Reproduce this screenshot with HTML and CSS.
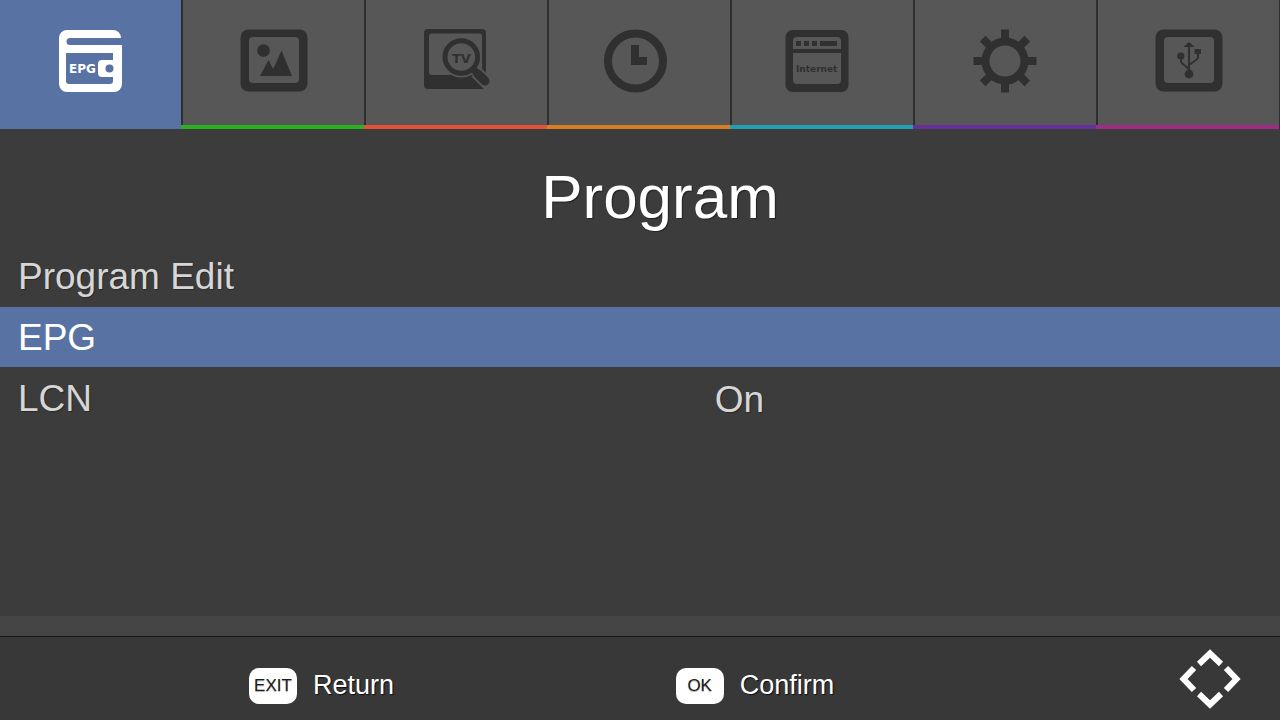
FILE: index.html
```html
<!DOCTYPE html>
<html lang="en">
<head>
    <meta charset="utf-8">
    <title>Program</title>
    <link rel="stylesheet" href="styles.css">
</head>
<body>
    <nav class="tabs">
        <button class="tab tab--active" type="button" aria-label="Program">
            <svg class="tab__icon" viewBox="0 0 81 72">
                <path fill-rule="evenodd" d="M17 6h46a8 8 0 0 1 8 8H20a3.500 3.500 0 0 0 0 7h52v39a8 8 0 0 1-8 8H17a8 8 0 0 1-8-8V14a8 8 0 0 1 8-8zM16 29v28a3 3 0 0 0 3 3h41a3 3 0 0 0 3-3v-4H52a4 4 0 0 1-4-4v-9a4 4 0 0 1 4-4h11v-7z"/>
                <circle class="tab__hole" cx="59.500" cy="44.500" r="4"/>
                <text class="tab__text" x="19" y="49" font-size="12">EPG</text>
            </svg>
        </button>
        <button class="tab tab--green" type="button" aria-label="Picture">
            <svg class="tab__icon" viewBox="0 0 81 72">
                <rect x="7.500" y="5.500" width="67" height="62" rx="8"/>
                <rect class="tab__hole" x="16" y="13" width="50" height="46" rx="4"/>
                <circle cx="30.500" cy="26.500" r="6.300"/>
                <path d="M27 52l8.500-16 4.700 9 8.300-18.500L59 52z"/>
            </svg>
        </button>
        <button class="tab tab--red" type="button" aria-label="Channel Search">
            <svg class="tab__icon" viewBox="0 0 81 72">
                <path fill-rule="evenodd" d="M12 5h54a4 4 0 0 1 4 4v56H12a4 4 0 0 1-4-4V9a4 4 0 0 1 4-4zM16 9.500a3 3 0 0 0-3 3V48a3 3 0 0 0 3 3h50V12.500a3 3 0 0 0-3-3z"/>
                <path class="tab__gap" d="M60 48L75 63"/>
                <circle class="tab__hole" cx="45.300" cy="33" r="20.500"/>
                <path class="tab__handle" d="M57 45l5 5"/>
                <path class="tab__grip" d="M62 50l7 7"/>
                <circle class="tab__lens" cx="45.300" cy="33" r="16.300"/>
                <text class="tab__text" x="36" y="39" font-size="13">TV</text>
            </svg>
        </button>
        <button class="tab tab--orange" type="button" aria-label="Time">
            <svg class="tab__icon" viewBox="0 0 81 72">
                <circle class="tab__line" cx="36.500" cy="37" r="27.500"/>
                <path d="M32 21h8v12h8v8H32z"/>
            </svg>
        </button>
        <button class="tab tab--cyan" type="button" aria-label="Option">
            <svg class="tab__icon" viewBox="0 0 81 72">
                <rect x="3.500" y="6" width="63" height="62" rx="7"/>
                <rect class="tab__hole" x="11" y="13" width="48" height="47" rx="4"/>
                <path d="M11 25h48v4H11zM14 17h5v5h-5zM22 17h5v5h-5zM30 17h5v5h-5zM38 17h17v5H38z"/>
                <text class="tab__text" x="14" y="48" font-size="9">Internet</text>
            </svg>
        </button>
        <button class="tab tab--purple" type="button" aria-label="System">
            <svg class="tab__icon" viewBox="0 0 81 72">
                <circle class="tab__line" cx="40" cy="37" r="19.500"/>
                <path class="tab__line" d="M40 18V5.500M40 56v12.500M21 37H8.500M59 37h12.500M26.500 23.500l-8.800-8.800M53.500 23.500l8.800-8.800M26.500 50.500l-8.800 8.800M53.500 50.500l8.800 8.800"/>
            </svg>
        </button>
        <button class="tab tab--magenta" type="button" aria-label="USB">
            <svg class="tab__icon" viewBox="0 0 81 72">
                <rect x="7.500" y="5.500" width="67" height="62" rx="8"/>
                <rect class="tab__hole" x="16" y="13" width="50" height="46" rx="4"/>
                <path class="tab__wire" d="M41 22v28M33 32v5q0 2 2 3l6 5M50 30v3q0 2-2 3l-7 5"/>
                <path d="M41 18l5.500 5h-11zM46.500 25h6.500v5h-6.500z"/>
                <circle cx="32.800" cy="32" r="3.600"/>
                <circle cx="41" cy="50" r="4.400"/>
            </svg>
        </button>
    </nav>

    <main class="content">
        <h1 class="title">Program</h1>
        <ul class="menu">
            <li><button class="menu__item" type="button">Program Edit</button></li>
            <li><button class="menu__item menu__item--active" type="button">EPG</button></li>
            <li class="menu__item">
                <label for="lcn">LCN</label>
                <select class="menu__value" id="lcn">
                    <option>On</option>
                    <option>Off</option>
                </select>
            </li>
        </ul>
    </main>

    <footer class="footer">
        <button class="hint" type="button"><span class="hint__key">EXIT</span>Return</button>
        <button class="hint" type="button"><span class="hint__key">OK</span>Confirm</button>
        <svg class="arrows" viewBox="0 0 64 64">
            <path d="M21 17L32 6.500 43 17M16 21L5.500 32 16 43M48 21l10.500 11L48 43M21 47l11 10.500L43 47"/>
        </svg>
    </footer>
</body>
</html>
```
FILE: styles.css
```css
* {
    margin: 0;
    padding: 0;
    box-sizing: border-box;
}
body {
    display: flex;
    flex-direction: column;
    min-height: 100vh;
    overflow-x: hidden;
    background: #3c3c3c;
    color: #d6d6d6;
    font-family: "Liberation Sans", Arial, sans-serif;
}
button, select {
    border: 0;
    background: none;
    color: inherit;
    font: inherit;
    text-align: left;
    cursor: pointer;
}
ul {
    list-style: none;
}

/* tabs */
.tabs {
    display: grid;
    grid-template-columns: repeat(7, 1fr);
    /* the first separator stays off screen */
    margin-left: -2px;
    padding-right: 1px;
    background: #2e2e2e;
}
.tab {
    display: flex;
    flex-direction: column;
    color: #303030;
    --face: #575757;
}
.tab::before {
    content: "";
    order: 1;
    align-self: stretch;
    height: 4px;
    background: var(--line);
}
.tab__icon {
    display: block;
    align-self: stretch;
    height: 125px;
    margin-left: 2px;
    padding: 24px 50px 29px;
    background: var(--face);
    fill: currentColor;
}
.tab--active {
    color: #fff;
    --face: #5872a3;
    --line: #5872a3;
}
.tab--green {
    --line: #2bb022;
}
.tab--red {
    --line: #e0523a;
}
.tab--orange {
    --line: #d57f22;
}
.tab--cyan {
    --line: #229fb5;
}
.tab--purple {
    --line: #66309c;
}
.tab--magenta {
    --line: #a02c86;
}
.tab__line {
    fill: none;
    stroke: currentColor;
    stroke-width: 8;
}
.tab__hole {
    fill: var(--face);
}
.tab__gap {
    stroke: var(--face);
    stroke-width: 13;
}
.tab__handle {
    stroke: currentColor;
    stroke-width: 7;
}
.tab__grip {
    stroke: currentColor;
    stroke-width: 9;
    stroke-linecap: round;
}
.tab__lens {
    fill: none;
    stroke: currentColor;
    stroke-width: 5;
}
.tab__wire {
    fill: none;
    stroke: currentColor;
    stroke-width: 2;
}
.tab__text {
    font-family: "DejaVu Sans", sans-serif;
    font-weight: bold;
}

/* menu */
.content {
    flex: 1;
}
.title {
    padding: 31px 0 13px 40px;
    color: #fff;
    font-size: 62px;
    font-weight: normal;
    line-height: 73px;
    text-align: center;
    text-shadow: 1px 1px 1px #222;
}
.menu {
    display: grid;
    gap: 1px;
}
.menu__item {
    display: grid;
    grid-template-columns: 56fr 44fr;
    align-items: center;
    width: 100%;
    height: 60px;
    padding: 2px 18px 0;
    font-size: 37px;
    text-shadow: 1px 1px 1px #2a2a2a;
}
.menu__item--active {
    background: #5872a3;
    color: #fff;
    text-shadow: none;
}
.menu__value {
    appearance: none;
    text-shadow: inherit;
}

/* footer */
.footer {
    display: grid;
    grid-template-columns: repeat(3, 1fr);
    align-items: center;
    height: 104px;
    padding-top: 21px;
    background: linear-gradient(#454545 20px, #161616 20px, #161616 21px, #383838 21px);
}
.hint {
    display: flex;
    align-items: center;
    gap: 16px;
    padding: 14px 0 0 249px;
    color: #fff;
    font-size: 27px;
    text-shadow: 1px 1px 1px #111;
}
.hint__key {
    width: 48px;
    height: 36px;
    border-radius: 10px;
    background: #fff;
    color: #1c1c1c;
    font-size: 17px;
    line-height: 36px;
    text-align: center;
    text-shadow: 0 1px 1px #aaa;
}
.arrows {
    justify-self: end;
    width: 64px;
    height: 64px;
    margin-right: 38px;
    fill: none;
    stroke: #fff;
    stroke-width: 6;
}
```
